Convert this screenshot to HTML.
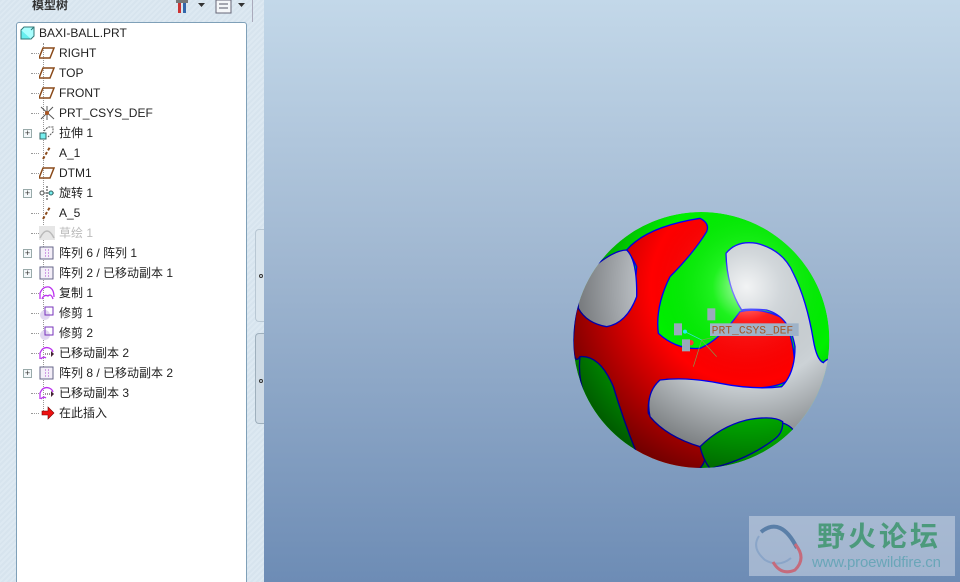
<!DOCTYPE html>
<html><head><meta charset="utf-8"><style>
*{margin:0;padding:0;box-sizing:border-box}
html,body{width:960px;height:582px;overflow:hidden}
body{position:relative;font-family:"Liberation Sans","Noto Sans CJK SC",sans-serif;font-size:12px;color:#222}
#left{position:absolute;left:0;top:0;width:264px;height:582px;overflow:hidden;background:repeating-linear-gradient(135deg,#d7e4ee 0 2px,#dde9f2 2px 4px)}
#title{position:absolute;left:32px;top:-4px;font-size:12px;font-weight:bold;color:#333}
#tree{position:absolute;left:16px;top:22px;width:231px;height:566px;background:#fff;border:1px solid #7fa0b8;border-radius:3px}
.row{position:absolute;left:0;height:20px;line-height:20px;white-space:nowrap}
.row .t{position:absolute;left:42px;top:0}
.ic{position:absolute;left:22px;top:3px;width:16px;height:14px}
.dot{position:absolute;left:14px;width:8px;border-top:1px dotted #999;top:10px}
.plus{position:absolute;left:6px;top:6px;width:9px;height:9px;border:1px solid #9aa;background:#f4f8fa;font-size:9px;line-height:7px;text-align:center;color:#333}
#vline{position:absolute;left:26px;top:20px;height:372px;border-left:1px dotted #999}
.h{position:absolute;left:255px;width:10px;border:1px solid #b9c8d4;border-right:none;border-radius:4px 0 0 4px;background:#dbe6ee}
.h i{position:absolute;left:3px;width:4px;height:4px;border:1px solid #333;border-radius:50%}
#vp{position:absolute;left:264px;top:0;width:696px;height:582px;background:linear-gradient(#c3d8e9,#a0b7d1 45%,#6d8cb5)}
#wm{position:absolute;left:749px;top:516px;width:206px;height:60px;background:rgba(205,215,230,.55);overflow:hidden}
</style></head><body>
<div id="left">
<div id="title">模型树</div>
<svg style="position:absolute;left:176px;top:0" width="80" height="14">
<rect x="2" y="0" width="3" height="13" fill="#c33"/><rect x="7" y="0" width="3" height="13" fill="#36a"/><rect x="0" y="0" width="12" height="3" fill="#777"/>
<path d="M22 3h7l-3.5 4z" fill="#333"/>
<rect x="40" y="0" width="15" height="13" fill="#f4f6f8" stroke="#667"/><path d="M43 4h9M43 8h9" stroke="#556"/>
<path d="M62 3h7l-3.5 4z" fill="#333"/>
</svg>
<div style="position:absolute;left:252px;top:0;height:22px;border-left:1px solid #aab"></div>
<div id="tree">
<div id="vline"></div>
<div class="row" style="top:0"><svg class="ic" style="left:3px" viewBox="0 0 16 14"><path d="M1 4h10v9H1z" fill="#6ee" stroke="#377"/><path d="M1 4l3-3h10v9l-3 3M11 4l3-3" fill="#aff" stroke="#377"/></svg><span class="t" style="left:22px">BAXI-BALL.PRT</span></div>
<div class="row" style="top:20px"><div class="dot"></div><svg class="ic" viewBox="0 0 16 14"><path d="M4 2h11l-4 10H0z" fill="none" stroke="#8a4a1a" stroke-width="1.5"/></svg><span class="t">RIGHT</span></div>
<div class="row" style="top:40px"><div class="dot"></div><svg class="ic" viewBox="0 0 16 14"><path d="M4 2h11l-4 10H0z" fill="none" stroke="#8a4a1a" stroke-width="1.5"/></svg><span class="t">TOP</span></div>
<div class="row" style="top:60px"><div class="dot"></div><svg class="ic" viewBox="0 0 16 14"><path d="M4 2h11l-4 10H0z" fill="none" stroke="#8a4a1a" stroke-width="1.5"/></svg><span class="t">FRONT</span></div>
<div class="row" style="top:80px"><div class="dot"></div><svg class="ic" viewBox="0 0 16 14"><path d="M2 1l13 12M14 1L2 13M8 0v14" stroke="#555"/><circle cx="8" cy="7" r="2" fill="#a52"/></svg><span class="t">PRT_CSYS_DEF</span></div>
<div class="row" style="top:100px"><div class="plus">+</div><svg class="ic" viewBox="0 0 16 14"><rect x="1" y="7" width="6" height="6" fill="#7ee" stroke="#366"/><path d="M5 5l4-4h5v5l-5 5" fill="none" stroke="#555" stroke-dasharray="2 1"/></svg><span class="t">拉伸 1</span></div>
<div class="row" style="top:120px"><div class="dot"></div><svg class="ic" viewBox="0 0 16 14"><path d="M4 13L11 1" stroke="#8a4a1a" stroke-width="2" stroke-dasharray="3 2"/></svg><span class="t">A_1</span></div>
<div class="row" style="top:140px"><div class="dot"></div><svg class="ic" viewBox="0 0 16 14"><path d="M4 2h11l-4 10H0z" fill="none" stroke="#8a4a1a" stroke-width="1.5"/></svg><span class="t">DTM1</span></div>
<div class="row" style="top:160px"><div class="plus">+</div><svg class="ic" viewBox="0 0 16 14"><path d="M8 0v14" stroke="#333" stroke-dasharray="2 1"/><path d="M1 7h14" stroke="#777"/><circle cx="3" cy="7" r="2" fill="#fff" stroke="#555"/><circle cx="12" cy="7" r="2" fill="#7ee" stroke="#366"/></svg><span class="t">旋转 1</span></div>
<div class="row" style="top:180px"><div class="dot"></div><svg class="ic" viewBox="0 0 16 14"><path d="M4 13L11 1" stroke="#8a4a1a" stroke-width="2" stroke-dasharray="3 2"/></svg><span class="t">A_5</span></div>
<div class="row" style="top:200px;color:#bbb"><div class="dot"></div><svg class="ic" viewBox="0 0 16 14"><rect width="16" height="14" fill="#e6e6e6"/><path d="M1 12Q8-2 15 12" fill="none" stroke="#bbb" stroke-width="1.5"/></svg><span class="t">草绘 1</span></div>
<div class="row" style="top:220px"><div class="plus">+</div><svg class="ic" viewBox="0 0 16 14"><rect x="1" y="1" width="13" height="12" fill="#f3eef8" stroke="#668"/><path d="M6 4h1M9 4h1M6 7h1M9 7h1M6 10h1M9 10h1" stroke="#a4c"/></svg><span class="t">阵列 6 / 阵列 1</span></div>
<div class="row" style="top:240px"><div class="plus">+</div><svg class="ic" viewBox="0 0 16 14"><rect x="1" y="1" width="13" height="12" fill="#f3eef8" stroke="#668"/><path d="M6 4h1M9 4h1M6 7h1M9 7h1M6 10h1M9 10h1" stroke="#a4c"/></svg><span class="t">阵列 2 / 已移动副本 1</span></div>
<div class="row" style="top:260px"><div class="dot"></div><svg class="ic" viewBox="0 0 16 14"><path d="M1 13V7Q4 0 10 1Q15 3 15 11M3 13Q5 8 9 10Q12 7 14 13" fill="none" stroke="#b3e" stroke-width="1.3"/></svg><span class="t">复制 1</span></div>
<div class="row" style="top:280px"><div class="dot"></div><svg class="ic" viewBox="0 0 16 14"><circle cx="6" cy="9" r="5" fill="#e0d6f0"/><rect x="6" y="1" width="8" height="8" fill="none" stroke="#73b"/></svg><span class="t">修剪 1</span></div>
<div class="row" style="top:300px"><div class="dot"></div><svg class="ic" viewBox="0 0 16 14"><circle cx="6" cy="9" r="5" fill="#e0d6f0"/><rect x="6" y="1" width="8" height="8" fill="none" stroke="#73b"/></svg><span class="t">修剪 2</span></div>
<div class="row" style="top:320px"><div class="dot"></div><svg class="ic" viewBox="0 0 16 14"><path d="M1 13V7Q4 0 10 2Q13 3 14 6M2 13Q4 10 7 12" fill="none" stroke="#b3e" stroke-width="1.3"/><path d="M6 8h7" stroke="#423" stroke-dasharray="1 1"/><path d="M12 5l3 3-3 3z" fill="#423"/></svg><span class="t">已移动副本 2</span></div>
<div class="row" style="top:340px"><div class="plus">+</div><svg class="ic" viewBox="0 0 16 14"><rect x="1" y="1" width="13" height="12" fill="#f3eef8" stroke="#668"/><path d="M6 4h1M9 4h1M6 7h1M9 7h1M6 10h1M9 10h1" stroke="#a4c"/></svg><span class="t">阵列 8 / 已移动副本 2</span></div>
<div class="row" style="top:360px"><div class="dot"></div><svg class="ic" viewBox="0 0 16 14"><path d="M1 13V7Q4 0 10 2Q13 3 14 6M2 13Q4 10 7 12" fill="none" stroke="#b3e" stroke-width="1.3"/><path d="M6 8h7" stroke="#423" stroke-dasharray="1 1"/><path d="M12 5l3 3-3 3z" fill="#423"/></svg><span class="t">已移动副本 3</span></div>
<div class="row" style="top:380px"><div class="dot"></div><svg class="ic" viewBox="0 0 16 14"><path d="M3 5h6V1l6 6-6 6V9H3z" fill="#e11" stroke="#700" stroke-width=".6"/></svg><span class="t">在此插入</span></div>
</div>
<div class="h" style="top:229px;height:93px"><i style="top:44px"></i></div>
<div class="h" style="top:333px;height:91px;background:#d0dce6;border-color:#9fb0bd"><i style="top:45px"></i></div>
</div>
<div id="vp"></div>
<svg style="position:absolute;left:560px;top:200px" width="280" height="280" viewBox="0 0 840 840">
<defs>
<clipPath id="c"><circle cx="424" cy="420" r="384"/></clipPath>
<radialGradient id="sh" cx="560" cy="260" r="640" gradientUnits="userSpaceOnUse">
<stop offset="0" stop-color="#fff" stop-opacity=".75"/><stop offset=".16" stop-color="#fff" stop-opacity=".12"/><stop offset=".45" stop-color="#000" stop-opacity="0"/><stop offset="1" stop-color="#000" stop-opacity=".65"/></radialGradient>
</defs>
<g clip-path="url(#c)" stroke="#00f" stroke-width="4">
<circle cx="424" cy="420" r="384" fill="#00f000" stroke="none"/>
<path d="M620 80Q720 150 790 260L830 200 700 60z" fill="#f00"/>
<path d="M790 600L830 700 700 820 720 700z" fill="#f00"/>
<path d="M40 420Q45 330 55 320Q100 385 170 370Q225 300 230 200Q210 160 200 150Q260 80 420 55Q450 70 440 95Q400 160 330 230Q285 320 295 400Q350 450 420 445Q480 420 540 335Q600 320 670 355Q705 420 705 520Q680 565 560 565Q450 545 320 538Q260 560 265 640Q300 700 420 740Q450 770 420 805Q330 810 230 760Q190 660 160 560Q120 470 60 470Q40 500 40 420z" fill="#f00"/>
<path d="M90 210Q160 150 200 150Q232 180 230 290Q200 370 140 380Q80 370 55 325Q50 250 90 210z" fill="#c8cdd2"/>
<path d="M498 160Q530 120 590 130Q670 150 700 220Q740 300 760 420Q770 480 790 488Q805 470 830 480L830 650 700 690Q670 650 560 670Q460 710 420 740Q320 710 270 650Q255 580 300 540Q380 530 480 550Q580 570 665 560Q705 520 705 440Q690 350 620 330Q560 325 545 330Q500 260 498 160z" fill="#ccd2d6"/>
<path d="M60 470Q120 465 160 560Q190 660 230 760Q150 720 100 640Q50 560 60 470z" fill="#00d000"/>
<path d="M420 740Q480 680 560 660Q640 645 668 665Q670 700 640 720Q560 780 450 806Q430 780 420 740z" fill="#00d000"/>
<circle cx="424" cy="420" r="384" fill="url(#sh)" stroke="none"/>
</g>
<g stroke-width="2">
<path d="M425 420L470 470M425 420L400 500M425 420L375 395M425 420L470 410" stroke="#7a5" fill="none"/>
<path d="M375 395L425 420" stroke="#2ee"/><circle cx="375" cy="395" r="6" fill="#2ee"/><circle cx="393" cy="428" r="8" fill="#f33"/>
</g>
<rect x="342" y="370" width="24" height="36" fill="#9ab"/><rect x="366" y="418" width="24" height="36" fill="#9ab"/><rect x="442" y="325" width="24" height="36" fill="#9ab"/>
<rect x="450" y="370" width="266" height="38" fill="#9fb3c8"/>
<text x="455" y="400" font-family="Liberation Mono,monospace" font-size="34" fill="#a55828">PRT_CSYS_DEF</text>
</svg>
<div id="wm">
<svg style="position:absolute;left:2px;top:2px" width="62" height="56" viewBox="0 0 62 56"><path d="M10 14Q30 -2 46 30" fill="none" stroke="#5a7fa8" stroke-width="4"/><path d="M8 18Q0 30 14 42Q28 50 40 40" fill="none" stroke="#8aa5c8" stroke-width="2"/><path d="M44 26Q56 40 44 52Q30 58 22 44" fill="none" stroke="#c56b7c" stroke-width="3"/></svg>
<div style="position:absolute;left:68px;top:2px;font-size:28px;font-weight:bold;color:#4c9a7c;letter-spacing:3px;font-family:'Noto Sans CJK SC',sans-serif;line-height:34px">野火论坛</div>
<div style="position:absolute;left:63px;top:38px;font-size:15px;color:#6aa6b8;line-height:18px;letter-spacing:-0.2px">www.proewildfire.cn</div>
</div>
</body></html>
